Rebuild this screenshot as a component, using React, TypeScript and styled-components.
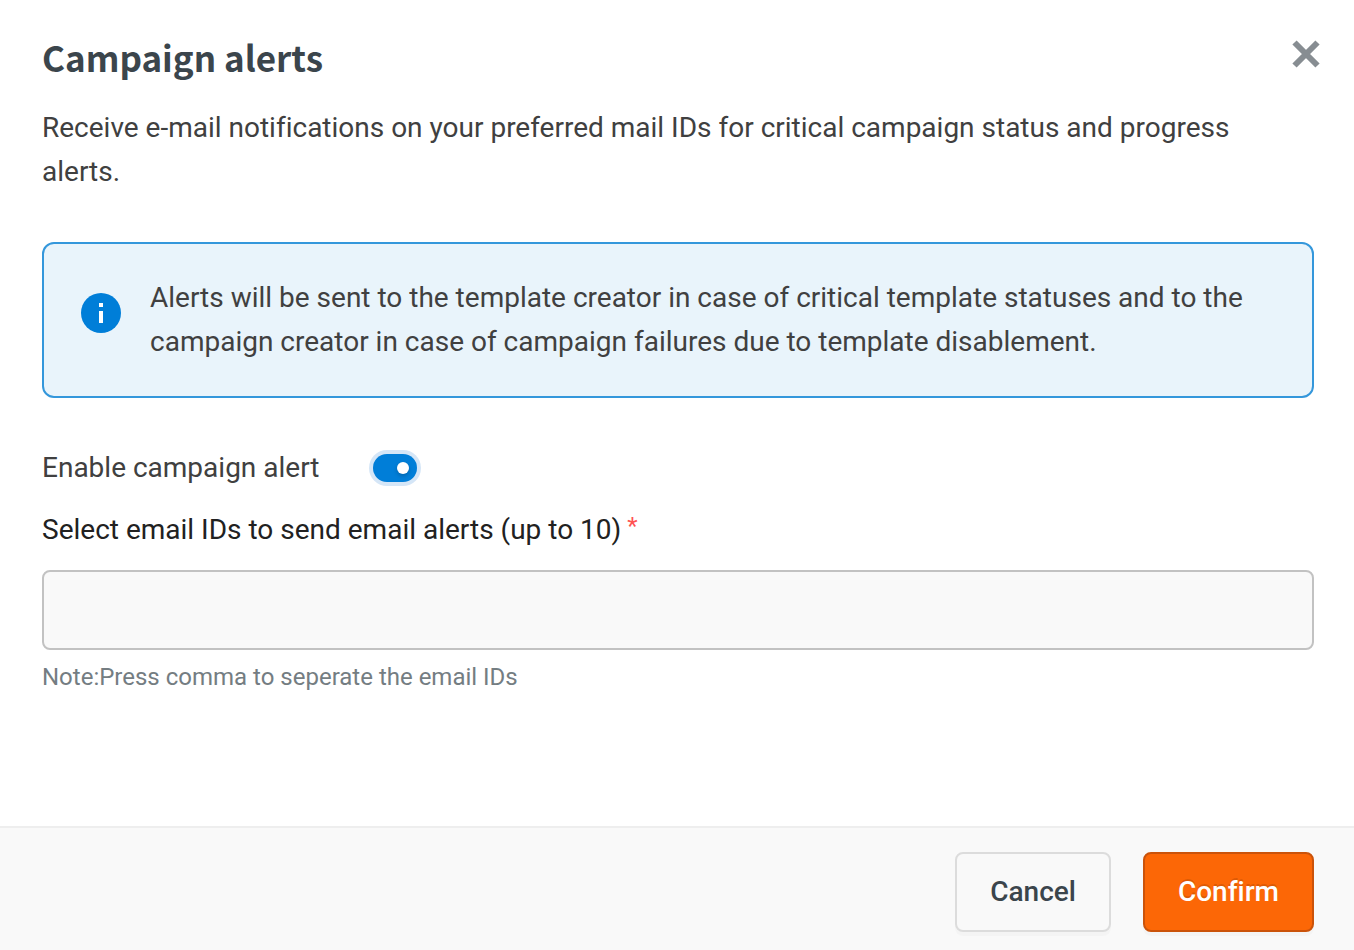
import React, { useState } from "react";
import styled, { createGlobalStyle } from "styled-components";

const GlobalStyle = createGlobalStyle`
  *, *::before, *::after { box-sizing: border-box; }
  body { margin: 0; background: #fff; }
  body, button, input {
    font-family: Roboto, "Liberation Sans", sans-serif;
    font-variant-ligatures: none;
  }
`;

const Dialog = styled.form`
  display: flex;
  flex-direction: column;
  min-height: 100vh;
  color: #404040;
  font-size: 28px;
  line-height: 44px;
`;

const Header = styled.header`
  display: flex;
  justify-content: space-between;
  align-items: flex-start;
  padding: 31px 32px 0 42px;
`;

const Title = styled.h1`
  margin: 0;
  color: #3b454c;
  font-family: "Noto Sans CJK SC", "Noto Sans", sans-serif;
  font-size: 35px;
  line-height: 52px;
  font-weight: 600;
`;

const CloseButton = styled.button`
  display: flex;
  padding: 8px 0;
  border: 0;
  background: none;
  color: #878d92;
  cursor: pointer;
`;

const Content = styled.main`
  flex: 1;
  padding: 23px 40px 64px 42px;
`;

const Description = styled.p`
  margin: 0;
  padding-right: 32px;
`;

const Notice = styled.section`
  display: flex;
  align-items: flex-start;
  gap: 28px;
  margin-top: 48px;
  padding: 32px 36px;
  border: 2px solid #3497db;
  border-radius: 12px;
  background: #e9f4fb;
`;

const InfoIcon = styled.svg`
  flex: none;
  width: 42px;
  height: 42px;
  margin-top: 16px;
`;

const NoticeText = styled.p`
  margin: 0;
`;

const ToggleRow = styled.div`
  display: flex;
  align-items: center;
  gap: 54px;
  margin-top: 48px;
`;

const Toggle = styled.input`
  appearance: none;
  display: flex;
  align-items: center;
  justify-content: flex-start;
  width: 44px;
  height: 28px;
  margin: 0;
  padding: 0 8px;
  border-radius: 14px;
  background: #9aa1a6;
  cursor: pointer;

  &::before {
    content: "";
    width: 12px;
    height: 12px;
    border-radius: 50%;
    background: #fff;
    box-shadow: 0 2px 4px rgba(0, 0, 0, 0.2);
  }

  &:checked {
    justify-content: flex-end;
    background: #007ed8;
    box-shadow: 0 0 0 4px #d5e6f7;
  }
`;

const FieldLabel = styled.label`
  display: flex;
  gap: 6px;
  margin-top: 18px;
  color: #212121;
`;

const Required = styled.span`
  color: #ff5252;
  font-size: 24px;
  line-height: 36px;
`;

const EmailInput = styled.input`
  display: block;
  width: 100%;
  height: 80px;
  margin-top: 18px;
  padding: 0 24px;
  border: 2px solid #c2c2c2;
  border-radius: 8px;
  background: #f9f9f9;
  color: #404040;
  font-size: 28px;
`;

const Note = styled.p`
  margin: 9px 0 0;
  color: #747d82;
  font-size: 24px;
  line-height: 36px;
`;

const Footer = styled.footer`
  display: flex;
  justify-content: flex-end;
  gap: 32px;
  padding: 24px 40px 18px;
  border-top: 2px solid #eee;
  background: #f9f9f9;
`;

const ActionButton = styled.button<{ $primary?: boolean }>`
  height: 80px;
  padding: 0 33px 2px;
  border: 2px solid ${(p) => (p.$primary ? "#cb530a" : "#dcdcdc")};
  border-radius: 8px;
  background: ${(p) => (p.$primary ? "#fc6706" : "#f9f9f9")};
  box-shadow: 0 4px 0 rgba(0, 0, 0, 0.02);
  color: ${(p) => (p.$primary ? "#fff" : "#3b454c")};
  font-size: 28px;
  font-weight: 500;
  text-shadow: ${(p) => (p.$primary ? "0 -2px 0 rgba(0, 0, 0, 0.12)" : "none")};
  cursor: pointer;
`;

export default function App() {
  const [enabled, setEnabled] = useState(true);
  const [emails, setEmails] = useState("");

  return (
    <>
      <GlobalStyle />
      <Dialog
        role="dialog"
        aria-labelledby="dialog-title"
        onSubmit={(e) => e.preventDefault()}
      >
        <Header>
          <Title id="dialog-title">Campaign alerts</Title>
          <CloseButton type="button" aria-label="Close">
            <svg width="32" height="30" viewBox="0 0 32 30" aria-hidden="true">
              <path d="M4.5 3.5 27.5 26.5M27.5 3.5 4.5 26.5" stroke="currentColor" strokeWidth="6" />
            </svg>
          </CloseButton>
        </Header>
        <Content>
          <Description>
            Receive e-mail notifications on your preferred mail IDs for critical campaign status and
            progress alerts.
          </Description>
          <Notice>
            <InfoIcon viewBox="0 0 42 42" aria-hidden="true">
              <circle cx="21" cy="21" r="20" fill="#007ed8" />
              <path d="M19 11h4v4h-4zM19 19h4v12h-4z" fill="#fff" />
            </InfoIcon>
            <NoticeText>
              Alerts will be sent to the template creator in case of critical template statuses and
              to the campaign creator in case of campaign failures due to template disablement.
            </NoticeText>
          </Notice>
          <ToggleRow>
            <label htmlFor="enable-alert">Enable campaign alert</label>
            <Toggle
              id="enable-alert"
              type="checkbox"
              role="switch"
              checked={enabled}
              onChange={(e) => setEnabled(e.target.checked)}
            />
          </ToggleRow>
          <FieldLabel htmlFor="emails">
            Select email IDs to send email alerts (up to 10)
            <Required>*</Required>
          </FieldLabel>
          <EmailInput
            id="emails"
            type="text"
            required
            aria-describedby="emails-note"
            value={emails}
            onChange={(e) => setEmails(e.target.value)}
          />
          <Note id="emails-note">Note:Press comma to seperate the email IDs</Note>
        </Content>
        <Footer>
          <ActionButton type="button">Cancel</ActionButton>
          <ActionButton type="submit" $primary>
            Confirm
          </ActionButton>
        </Footer>
      </Dialog>
    </>
  );
}
